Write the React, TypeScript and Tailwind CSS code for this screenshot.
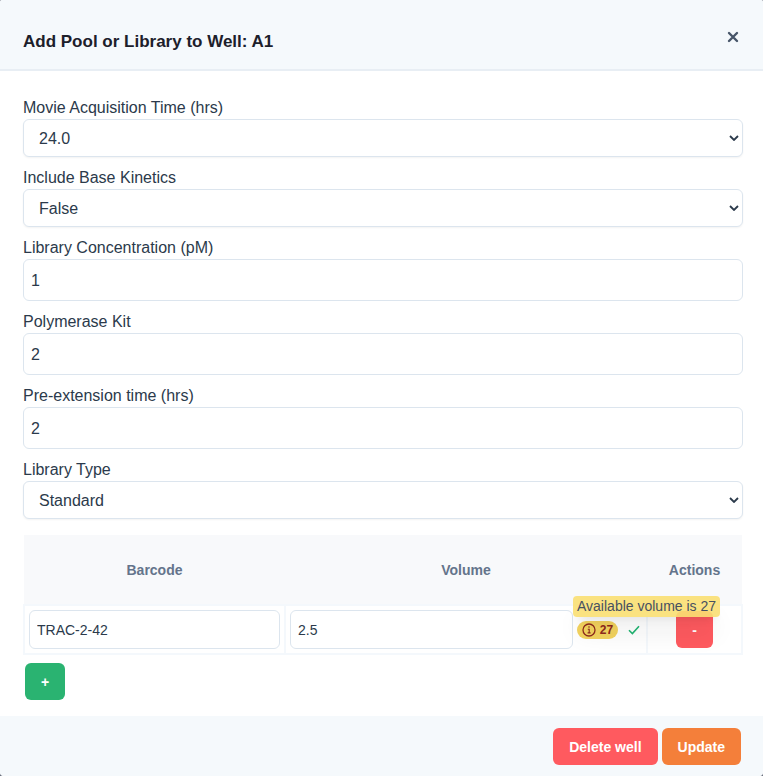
import { useState } from "react";
import type { ReactNode } from "react";

const LABEL = "block h-6 leading-[26px]";
const FIELD =
  "block w-full rounded-md border border-[#dce5ee] bg-white pt-0.5 text-base text-[#2b3a4b] outline-none";

function SelectField({ id, label, options }: { id: string; label: string; options: string[] }) {
  return (
    <div>
      <label htmlFor={id} className={LABEL}>
        {label}
      </label>
      <div className="grid items-center">
        <select
          id={id}
          className={`${FIELD} col-start-1 row-start-1 h-[38px] appearance-none px-[15px] shadow-xs`}
        >
          {options.map((option) => (
            <option key={option}>{option}</option>
          ))}
        </select>
        <svg
          viewBox="0 0 10 6"
          className="pointer-events-none col-start-1 row-start-1 mr-1 h-[6px] w-[10px] justify-self-end"
          fill="none"
          stroke="#2b3a4b"
          strokeWidth="1.8"
          aria-hidden="true"
        >
          <path d="M1 1l4 4 4-4" />
        </svg>
      </div>
    </div>
  );
}

function NumberField({ id, label, value }: { id: string; label: string; value: string }) {
  const [text, setText] = useState(value);
  return (
    <div>
      <label htmlFor={id} className={LABEL}>
        {label}
      </label>
      <input
        id={id}
        value={text}
        onChange={(e) => setText(e.target.value)}
        className={`${FIELD} h-[42px] px-[7px]`}
      />
    </div>
  );
}

function HeaderCell({ children }: { children: ReactNode }) {
  return (
    <th scope="col" className="h-[70px] bg-[#f8f9fb] text-center font-bold text-[#64748b]">
      {children}
    </th>
  );
}

const CELL_INPUT =
  "h-[39px] w-full min-w-0 rounded-md border border-[#dce5ee] bg-white px-[7px] text-sm text-[#2b3a4b] outline-none";
const CELL = "border-2 border-[#f4f8fc] px-1 py-1";

export default function App() {
  return (
    <div className="bg-[#6b7280] font-['Liberation_Sans',Arial,sans-serif] text-base text-[#2b3a4b]">
      <div role="dialog" aria-labelledby="title" className="overflow-hidden rounded-t-xs rounded-b-sm bg-white">
        <header className="flex h-[71px] items-start justify-between border-b-2 border-[#e8eef4] bg-[#f5f9fc] pt-7 pr-6 pl-[23px]">
          <h1 id="title" className="text-[17px] leading-7 font-bold text-[#1c202b]">
            Add Pool or Library to Well: A1
          </h1>
          <button type="button" aria-label="Close" className="mt-[3px] flex h-3 w-3 items-center justify-center">
            <svg viewBox="0 0 12 12" className="h-3 w-3" fill="none" stroke="#475569" strokeWidth="2.4" strokeLinecap="round" aria-hidden="true">
              <path d="M2 2l8 8M10 2l-8 8" />
            </svg>
          </button>
        </header>

        <main className="px-5 pt-6 pb-4 pl-[23px]">
          <form className="flex flex-col gap-2">
            <SelectField id="movie" label="Movie Acquisition Time (hrs)" options={["24.0"]} />
            <SelectField id="kinetics" label="Include Base Kinetics" options={["False", "True"]} />
            <NumberField id="concentration" label="Library Concentration (pM)" value="1" />
            <NumberField id="kit" label="Polymerase Kit" value="2" />
            <NumberField id="extension" label="Pre-extension time (hrs)" value="2" />
            <SelectField id="type" label="Library Type" options={["Standard"]} />
          </form>

          <table className="mt-4 w-full table-fixed border-collapse text-sm">
            <colgroup>
              <col className="w-[261px]" />
              <col />
              <col className="w-[95px]" />
            </colgroup>
            <thead>
              <tr>
                <HeaderCell>Barcode</HeaderCell>
                <HeaderCell>Volume</HeaderCell>
                <HeaderCell>Actions</HeaderCell>
              </tr>
            </thead>
            <tbody>
              <tr>
                <td className={CELL}>
                  <input aria-label="Barcode" defaultValue="TRAC-2-42" className={`${CELL_INPUT} block`} />
                </td>
                <td className={CELL}>
                  <div className="flex items-center gap-1">
                    <input aria-label="Volume" defaultValue="2.5" className={`${CELL_INPUT} flex-1`} />
                    <div className="relative flex items-center">
                      <span className="flex h-[18px] w-[41px] items-center justify-center gap-1 rounded-full bg-[#f3d35e] text-xs font-bold text-[#8f2a1c]">
                        <svg viewBox="0 0 14 14" className="h-[14px] w-[14px]" fill="none" stroke="currentColor" aria-hidden="true">
                          <circle cx="7" cy="7" r="6" strokeWidth="1.3" />
                          <path d="M5.8 6.2h1.4v3.6M5.6 9.9h3" strokeWidth="1.1" />
                          <circle cx="7" cy="4" r="0.8" fill="currentColor" stroke="none" />
                        </svg>
                        27
                      </span>
                      <span
                        role="tooltip"
                        className="absolute bottom-full -left-1 z-10 mb-1 rounded-sm bg-[#fadf72]/90 px-1 leading-[21px] whitespace-nowrap text-[#475060] shadow-xl"
                      >
                        Available volume is 27
                      </span>
                    </div>
                    <svg viewBox="0 0 12 10" className="mr-0.5 ml-1.5 h-[10px] w-3 shrink-0" fill="none" stroke="#22b573" strokeWidth="1.6" aria-hidden="true">
                      <path d="M1 5.2l3.4 3.4L11 1.2" />
                    </svg>
                  </div>
                </td>
                <td className={CELL}>
                  <button type="button" aria-label="Remove" className="mx-auto block h-[37px] w-[37px] rounded-md bg-[#ff5a5f] font-bold text-white">
                    -
                  </button>
                </td>
              </tr>
            </tbody>
          </table>
          <button type="button" aria-label="Add" className="mt-2 ml-0.5 block h-[37px] w-10 rounded-md bg-[#2ab371] text-sm font-bold text-white">
            +
          </button>
        </main>

        <footer className="flex justify-end gap-1 bg-[#f5f9fc] pt-3 pr-[22px] pb-[11px] text-sm font-bold text-white">
          <button type="button" className="h-[37px] rounded-md bg-[#ff5a5f] px-4">
            Delete well
          </button>
          <button type="button" className="h-[37px] rounded-md bg-[#f47f3a] px-4">
            Update
          </button>
        </footer>
      </div>
    </div>
  );
}
